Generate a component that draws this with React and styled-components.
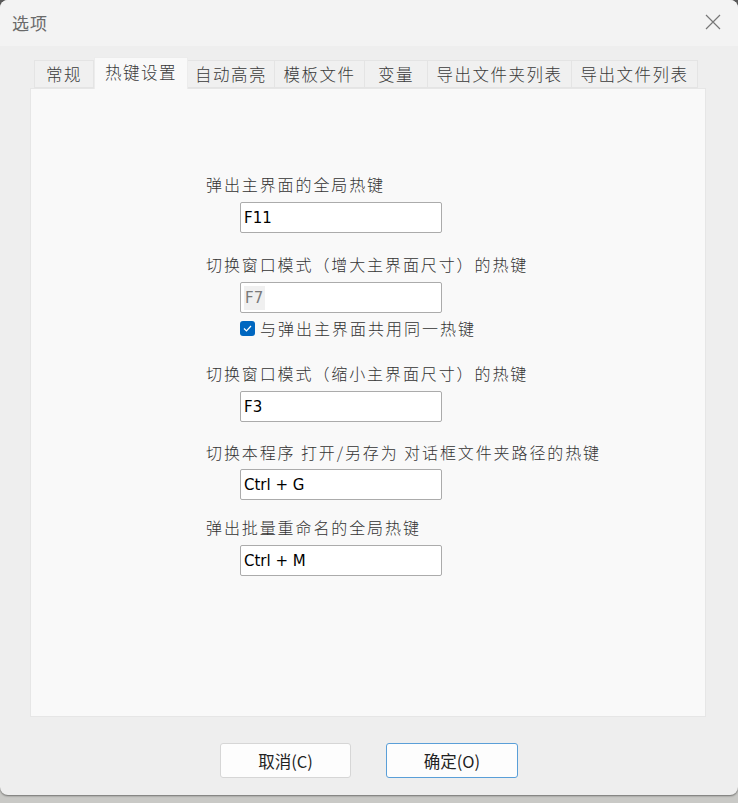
import React from "react";
import styled, { createGlobalStyle } from "styled-components";

const Global = createGlobalStyle`
  html, body { margin: 0; padding: 0; }
  body {
    width: 738px; height: 803px; overflow: hidden;
    background: linear-gradient(#5a5a5a 0, #5a5a5a 40px, #c9c9c6 40px);
    font-family: "Noto Sans CJK SC", "Noto Sans", sans-serif;
  }
`;

const Window = styled.div`
  width: 738px;
  height: 795px;
  background: #eeeeee;
  border-radius: 8px;
  box-shadow: 0 1px 2px rgba(0,0,0,0.45);
  display: flex;
  flex-direction: column;
  overflow: hidden;
`;

const TitleBar = styled.div`
  height: 44px;
  flex: none;
  background: #f3f3f3;
  display: flex;
  align-items: center;
  justify-content: space-between;
  padding: 0 16px 2px 12px;
`;

const Title = styled.div`
  font-size: 17px;
  color: #6a6a6a;
  letter-spacing: 1px;
`;

const Close = styled.div`
  width: 18px;
  height: 18px;
  display: flex;
  align-items: center;
  justify-content: center;
`;

const Tabs = styled.div`
  margin: 11px 0 0 34px;
  height: 31px;
  display: flex;
  align-items: flex-end;
  position: relative;
  z-index: 1;
`;

const Tab = styled.div`
  box-sizing: border-box;
  width: ${p => p.$w}px;
  height: ${p => (p.$active ? 32 : 28)}px;
  background: ${p => (p.$active ? "#f9f9f9" : "#f0f0f0")};
  border: 1px solid ${p => (p.$active ? "#ececec" : "#e4e4e4")};
  border-bottom: ${p => (p.$active ? "none" : "1px solid #e4e4e4")};
  border-left: ${p => (p.$first || p.$active ? "" : "none")};
  margin-bottom: ${p => (p.$active ? -1 : 0)}px;
  display: flex;
  align-items: center;
  justify-content: center;
  padding-bottom: ${p => (p.$active ? 3 : 0)}px;
  font-size: 16.5px;
  letter-spacing: 1.5px;
  color: #3a3a3a;
  font-family: "Noto Sans CJK SC", sans-serif;
  font-weight: 300;
`;

const Panel = styled.div`
  margin: 0 32px 0 30px;
  height: 629px;
  box-sizing: border-box;
  background: #f9f9f9;
  border: 1px solid #e6e6e6;
  padding: 84px 0 0 175px;
  display: flex;
  flex-direction: column;
  align-items: flex-start;
`;

const Label = styled.div`
  margin-top: ${p => p.$mt}px;
  height: 22px;
  line-height: 22px;
  font-size: 16px;
  letter-spacing: 1.9px;
  color: #333;
  font-weight: 300;
  white-space: nowrap;
`;

const Input = styled.div`
  margin: ${p => p.$mt ?? 7}px 0 0 34px;
  box-sizing: border-box;
  width: 202px;
  height: 31px;
  background: #fff;
  border: 1px solid #ababab;
  border-radius: 2px;
  display: flex;
  align-items: center;
  padding-left: 3px;
  font-family: "DejaVu Sans", sans-serif;
  font-size: 15px;
  color: #000;
`;

const Dim = styled.span`
  background: #f0f0f0;
  color: #7a7a7a;
  padding: 3px 2px 3px 1px;
`;

const CheckRow = styled.div`
  margin: 6px 0 0 34px;
  height: 18px;
  display: flex;
  align-items: center;
  gap: 5px;
`;

const Box = styled.div`
  width: 15px;
  height: 15px;
  border-radius: 3px;
  background: #0067c0;
  display: flex;
  align-items: center;
  justify-content: center;
`;

const CheckText = styled.span`
  font-size: 16px;
  letter-spacing: 2px;
  color: #333;
  font-weight: 300;
`;

const Footer = styled.div`
  margin-top: 26px;
  display: flex;
  gap: 35px;
  padding-left: 220px;
`;

const Button = styled.div`
  box-sizing: border-box;
  width: ${p => p.$w}px;
  height: 35px;
  background: #fdfdfd;
  border: 1px solid ${p => (p.$primary ? "#5a9fd8" : "#d6d6d6")};
  border-radius: 3px;
  display: flex;
  align-items: center;
  justify-content: center;
  font-size: 16.5px;
  color: #222;
  font-family: "Noto Sans CJK SC", sans-serif;
`;

const tabs = [
  ["常规", 60],
  ["热键设置", 94, true],
  ["自动高亮", 87],
  ["模板文件", 90],
  ["变量", 63],
  ["导出文件夹列表", 144],
  ["导出文件列表", 126],
];

export default function App() {
  return (
    <>
      <Global />
      <Window>
        <TitleBar>
          <Title>选项</Title>
          <Close>
            <svg width="16" height="16" viewBox="0 0 16 16">
              <path d="M1 1 L15 15 M15 1 L1 15" stroke="#777" strokeWidth="1.2" fill="none" />
            </svg>
          </Close>
        </TitleBar>
        <Tabs>
          {tabs.map(([t, w, a], i) => (
            <Tab key={t} $w={w} $active={a} $first={i === 0}>{t}</Tab>
          ))}
        </Tabs>
        <Panel>
          <Label $mt={0}>弹出主界面的全局热键</Label>
          <Input>F11</Input>
          <Label $mt={20}>切换窗口模式（增大主界面尺寸）的热键</Label>
          <Input><Dim>F7</Dim></Input>
          <CheckRow>
            <Box>
              <svg width="9" height="7" viewBox="0 0 9 7">
                <path d="M1 3.5 L3.5 6 L8 1" stroke="#fff" strokeWidth="1.2" fill="none" />
              </svg>
            </Box>
            <CheckText>与弹出主界面共用同一热键</CheckText>
          </CheckRow>
          <Label $mt={25}>切换窗口模式（缩小主界面尺寸）的热键</Label>
          <Input>F3</Input>
          <Label $mt={19}>切换本程序 打开/另存为 对话框文件夹路径的热键</Label>
          <Input $mt={6}>Ctrl + G</Input>
          <Label $mt={16}>弹出批量重命名的全局热键</Label>
          <Input>Ctrl + M</Input>
        </Panel>
        <Footer>
          <Button $w={131}>取消(C)</Button>
          <Button $w={132} $primary>确定(O)</Button>
        </Footer>
      </Window>
    </>
  );
}
